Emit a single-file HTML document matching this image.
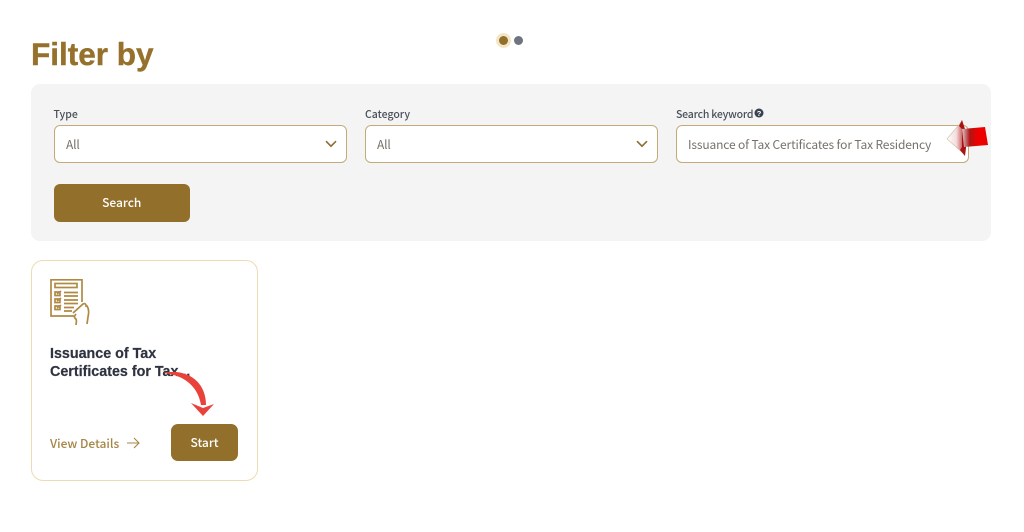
<!DOCTYPE html>
<html><head><meta charset="utf-8"><style>
html,body{margin:0;padding:0;background:#fff;width:1024px;height:532px;overflow:hidden}
body{position:relative;font-family:"Noto Sans CJK SC","Liberation Sans",sans-serif}
.a{position:absolute;white-space:nowrap}
.panel{left:30.500px;top:84px;width:960.500px;height:157px;background:#f4f4f4;border-radius:9px}
.label{font-size:10.500px;line-height:14px;color:#4a4f5a;font-weight:500;top:108px}
.field{top:125px;height:36px;background:#fff;border:1px solid #c4aa78;border-radius:6px}
.val{top:136px;font-size:12px;line-height:18px;color:#77706a;letter-spacing:-.14px}
.btn{background:#92702c;border-radius:6px;color:#fff;font-size:12px;font-weight:500;text-align:center}
</style></head><body>
<div class="a" style="left:31px;top:35px;font:bold 31.500px/38px 'Liberation Sans',sans-serif;color:#96712c;-webkit-text-stroke:.4px #96712c">Filter by</div>
<div class="a" style="left:496px;top:33px;width:15px;height:15px;border-radius:50%;background:#f3e6c8"></div>
<div class="a" style="left:499px;top:36px;width:9px;height:9px;border-radius:50%;background:#92702c"></div>
<div class="a" style="left:514px;top:36px;width:9px;height:9px;border-radius:50%;background:#6f7480"></div>
<div class="a panel"></div>
<div class="a label" style="left:53.500px">Type</div>
<div class="a label" style="left:365px">Category</div>
<div class="a label" style="left:676px;letter-spacing:-.2px">Search keyword</div>
<svg class="a" style="left:754px;top:108px" width="10" height="10" viewBox="0 0 10 10"><circle cx="5" cy="5" r="4.500" fill="#3a4252"/><text x="5" y="8" font-size="7.500" font-weight="bold" text-anchor="middle" fill="#fff" font-family="Liberation Sans">?</text></svg>
<div class="a field" style="left:53.500px;width:291px"></div>
<div class="a field" style="left:365px;width:291px"></div>
<div class="a field" style="left:676px;width:290.500px"></div>
<div class="a val" style="left:66px">All</div>
<div class="a val" style="left:377px">All</div>
<div class="a val" style="left:688px">Issuance of Tax Certificates for Tax Residency</div>
<svg class="a" style="left:325px;top:140px" width="12" height="8" viewBox="0 0 12 8"><path d="M1 1.200L6 6.200L11 1.200" fill="none" stroke="#8c6d33" stroke-width="1.600"/></svg>
<svg class="a" style="left:636px;top:140px" width="12" height="8" viewBox="0 0 12 8"><path d="M1 1.200L6 6.200L11 1.200" fill="none" stroke="#8c6d33" stroke-width="1.600"/></svg>
<svg class="a" style="left:945px;top:118px" width="46" height="40" viewBox="0 0 46 40">
<defs><linearGradient id="g" x1="0" x2="1" y1="0" y2="0"><stop offset="0" stop-color="#fff"/><stop offset=".55" stop-color="#f4dcdc"/><stop offset="1" stop-color="#c04040"/></linearGradient>
<linearGradient id="r" x1="0" x2="1"><stop offset="0" stop-color="#d8c8c8"/><stop offset=".3" stop-color="#b01515"/><stop offset=".6" stop-color="#f00000"/><stop offset="1" stop-color="#e80000"/></linearGradient></defs>
<path d="M2 21L17 3L19 36Z" fill="url(#g)" stroke="#cdbfa6" stroke-width=".6"/>
<path d="M14 8L17 2L20 11L21 30L20 38L15 32L17 29L17 11Z" fill="#a81414"/>
<path d="M17 11L40 9L43 27L19 29Z" fill="url(#r)"/>
</svg>
<div class="a btn" style="left:53.500px;top:184px;width:136.500px;height:38px;line-height:37px">Search</div>
<div class="a" style="left:31px;top:260px;width:224.500px;height:219px;border:1px solid #ecdcb4;border-radius:12px;background:#fff"></div>
<svg class="a" style="left:49px;top:277px" width="42" height="50" viewBox="0 0 42 50" fill="none" stroke="#b08a45" stroke-width="1.700">
<path d="M25 39H2V2.800H33V25"/>
<rect x="6" y="6.500" width="22" height="4"/>
<path d="M6 15h5v3.500h-5zM6 22h5v3.500h-5zM6 29h5v3.500h-5zM8 17l4-3M8 24l4-3M8 31l4-3"/>
<path d="M15 15.500h14M15 19h14M15 23h14M15 26.500h14M15 30.500h10M15 34h8"/>
<path d="M24 36l10-9c2-1 3 0 3 2l1 0c2 3 2 7 1 11l-1 7M27 37c-2 2-2 4 0 5 1 2 0 4 0 6"/>
</svg>
<div class="a" style="left:50px;top:345px;font:bold 14.300px/18px 'Liberation Sans',sans-serif;color:#2f3340;-webkit-text-stroke:.2px #2f3340">Issuance of Tax<br>Certificates for Tax...</div>
<div class="a" style="left:50px;top:435px;font-size:12px;line-height:18px;font-weight:500;color:#a58547">View Details</div>
<svg class="a" style="left:127px;top:437px" width="13" height="12" viewBox="0 0 13 12"><path d="M0 6H12M7 1L12 6L7 11" fill="none" stroke="#a58547" stroke-width="1.100"/></svg>
<div class="a btn" style="left:171px;top:424px;width:67px;height:37px;line-height:37px;border-radius:7px">Start</div>
<svg class="a" style="left:160px;top:365px" width="60" height="55" viewBox="0 0 60 55">
<path d="M3 8C25 3 46 15 46 40L41 40C38 22 25 10 3 8Z" fill="#e8423a"/>
<path d="M31 38L43 43L54 39L43 51Z" fill="#e8423a"/>
</svg>
</body></html>
